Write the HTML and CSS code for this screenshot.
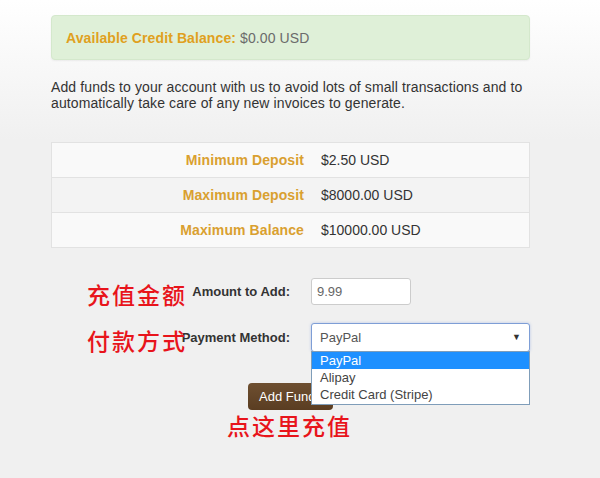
FILE: index.html
```html
<!DOCTYPE html>
<html lang="zh">
<head>
  <meta charset="UTF-8" />
  <title>Add Funds</title>
  <meta name="viewport" content="width=device-width, initial-scale=1" />
  <link rel="stylesheet" href="styles.css">
</head>
<body>
  <main class="page">
    <div class="alert-credit">
      <strong>Available Credit Balance:</strong> $0.00 USD
    </div>

    <p class="intro">Add funds to your account with us to avoid lots of small transactions and to automatically take care of any new invoices to generate.</p>

    <table class="limits">
      <tr>
        <td class="limit-label">Minimum Deposit</td>
        <td>$2.50 USD</td>
      </tr>
      <tr>
        <td class="limit-label">Maximum Deposit</td>
        <td>$8000.00 USD</td>
      </tr>
      <tr>
        <td class="limit-label">Maximum Balance</td>
        <td>$10000.00 USD</td>
      </tr>
    </table>

    <form class="funds-form">
      <div class="form-row">
        <span class="note">充值金额</span>
        <label for="amount">Amount to Add:</label>
        <div><input type="text" id="amount" class="amount-input" value="9.99" /></div>
      </div>
      <div class="form-row">
        <span class="note note-pay">付款方式</span>
        <label for="method">Payment Method:</label>
        <div class="select-wrap">
          <div class="fake-select" id="method">PayPal <span class="caret">&#9660;</span></div>
          <ul class="select-list">
            <li class="active">PayPal</li>
            <li>Alipay</li>
            <li>Credit Card (Stripe)</li>
          </ul>
        </div>
      </div>
      <div class="form-submit">
        <button type="submit">Add Funds</button>
        <span class="note-submit">点这里充值</span>
      </div>
    </form>
  </main>
</body>
</html>
```

FILE: styles.css
```css
body {
  margin: 0;
  font-family: "Liberation Sans", Arial, sans-serif;
  font-size: 14px;
  color: #333;
  background: linear-gradient(#ffffff 0, #f0f0f0 140px) no-repeat;
  background-color: #f0f0f0;
  min-height: 478px;
}
.page {
  width: 479px;
  margin-left: 51px;
  padding-top: 15px;
}
.alert-credit {
  background: #dff0d8;
  border: 1px solid #d4e8cc;
  border-radius: 4px;
  padding: 14px 14px;
  height: 15px;
  line-height: 17px;
  color: #6b6b6b;
  letter-spacing: 0.1px;
  box-shadow: 0 1px 2px rgba(0,0,0,0.06);
}
.alert-credit strong {
  color: #e0a020;
}
.intro {
  margin: 19px 0 31px 0;
  line-height: 16px;
  letter-spacing: 0.11px;
  color: #333;
}
.limits {
  width: 100%;
  border-collapse: collapse;
  border: 1px solid #e2e2e2;
  background: #f9f9f9;
}
.limits td {
  border-top: 1px solid #e2e2e2;
  height: 18px;
  padding: 8px 8px 8px 9px;
  line-height: 18px;
}
.limits tr:nth-child(2) td {
  background: #f3f3f3;
}
.limits .limit-label {
  width: 243px;
  text-align: right;
  font-weight: bold;
  color: #d9a030;
  letter-spacing: 0.1px;
}
.funds-form {
  margin-top: 30px;
}
.form-row {
  position: relative;
  display: grid;
  grid-template-columns: 250px 1fr;
  column-gap: 10px;
  align-items: center;
  margin-bottom: 18px;
}
.form-row label {
  text-align: right;
  padding-right: 11px;
  font-size: 13px;
  font-weight: bold;
  color: #333;
}
.amount-input {
  box-sizing: border-box;
  width: 100px;
  height: 27px;
  border: 1px solid #ccc;
  border-radius: 3px;
  padding: 0 5px;
  font-family: "Liberation Sans", Arial, sans-serif;
  font-size: 13px;
  color: #666;
  background: #fff;
}
.note,
.note-submit {
  position: absolute;
  font-family: "Noto Sans CJK SC", sans-serif;
  font-size: 23px;
  font-weight: 500;
  color: #e8141b;
  letter-spacing: 2px;
}
.note {
  left: 36px;
  top: -1px;
}
.note-pay {
  top: 0;
}
.select-wrap {
  position: relative;
}
.fake-select {
  box-sizing: border-box;
  height: 29px;
  border: 1px solid #7e9ed6;
  border-radius: 3px;
  padding: 0 8px;
  line-height: 27px;
  font-size: 13px;
  color: #555;
  background: #fff;
  box-shadow: 0 0 3px rgba(102,140,220,0.4);
}
.caret {
  float: right;
  font-size: 9px;
  color: #333;
}
.select-list {
  position: absolute;
  left: 0;
  right: 0;
  top: 28px;
  z-index: 2;
  margin: 0;
  padding: 0 0 1px 0;
  list-style: none;
  background: #fff;
  border: 1px solid #7f9db9;
  font-size: 13px;
  line-height: 17px;
  color: #444;
}
.select-list li {
  padding: 0 8px;
}
.select-list li.active {
  background: #1e90ff;
  color: #fff;
}
.form-submit {
  position: relative;
  text-align: center;
  margin-top: 31px;
}
.form-submit button {
  background: linear-gradient(#6e4f30, #5a3d22);
  color: #fff;
  border: none;
  border-radius: 4px;
  padding: 0 11px;
  height: 27px;
  font-family: "Liberation Sans", Arial, sans-serif;
  font-size: 13px;
}
.note-submit {
  left: 176px;
  top: 25px;
}
```
